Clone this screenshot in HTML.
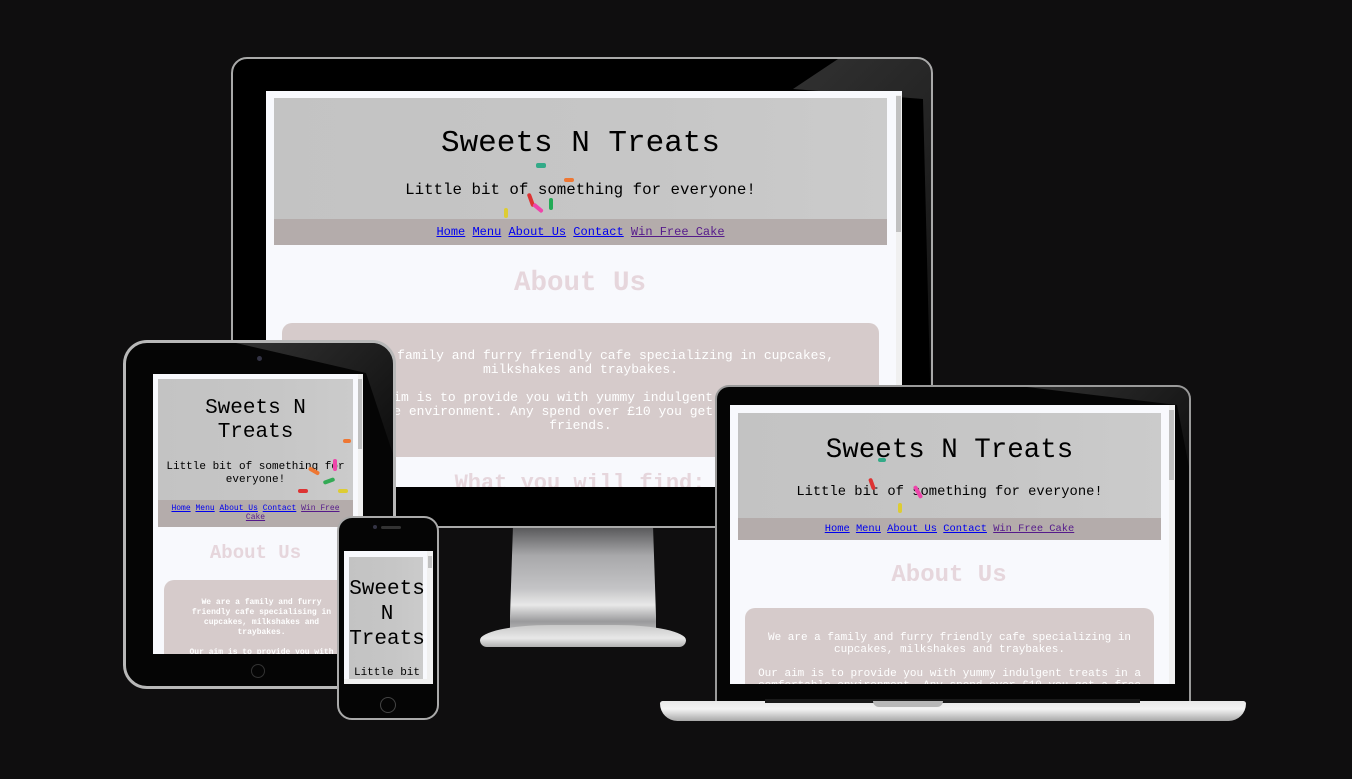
<!DOCTYPE html>
<html><head><meta charset="utf-8"><style>
*{margin:0;padding:0;box-sizing:border-box}
body{width:1352px;height:779px;background:#0f0e0f;position:relative;overflow:hidden;font-family:"Liberation Mono","Courier New",monospace}
.a{position:absolute}
.hdr{position:absolute;background:linear-gradient(90deg,#c3c3c3 0%,#c6c6c6 60%,#cbcbcb 100%);text-align:center;color:#000;overflow:hidden}
.nav{position:absolute;background:#b4acab;text-align:center}
.nav span{color:#00e;text-decoration:underline}
.nav span.v{color:#551a8b}
.h2{position:absolute;text-align:center;color:#e6d6dc;font-weight:bold}
.card{position:absolute;background:#d6cbcb;border-radius:10px;color:#fff;text-align:center;overflow:hidden}
.dot{position:absolute;border-radius:2px}
.gl{position:absolute;background:linear-gradient(135deg,rgba(90,90,90,.55),rgba(30,30,30,.25))}
</style></head><body>

<!-- MONITOR -->
<div class="a" style="left:231px;top:57px;width:702px;height:471px;background:#000;border:2px solid #a9a9a9;border-radius:16px;overflow:hidden">
  <div class="gl" style="left:560px;top:0;width:140px;height:440px;clip-path:polygon(45px 0,140px 0,140px 440px,100% 440px,130px 40px,0 30px)"></div>
</div>
<div class="a" style="left:266px;top:91px;width:636px;height:396px;background:#f8f9fd;overflow:hidden">
  <div class="hdr" style="left:8px;top:7px;width:613px;height:121px">
    <div class="a" style="left:0;top:28px;width:613px;font-size:31px">Sweets N Treats</div>
    <div class="a" style="left:0;top:83px;width:613px;font-size:15.8px">Little bit of something for everyone!</div>
    <div class="dot" style="left:255px;top:95px;width:4px;height:14px;background:#d33;transform:rotate(-20deg)"></div>
    <div class="dot" style="left:262px;top:65px;width:10px;height:5px;background:#3a8;"></div>
    <div class="dot" style="left:290px;top:80px;width:10px;height:4px;background:#e73"></div>
    <div class="dot" style="left:258px;top:108px;width:12px;height:4px;background:#e4a;transform:rotate(40deg)"></div>
    <div class="dot" style="left:230px;top:110px;width:4px;height:10px;background:#dc3"></div>
    <div class="dot" style="left:275px;top:100px;width:4px;height:12px;background:#2a5"></div>
  </div>
  <div class="nav" style="left:8px;top:128px;width:613px;height:26px;font-size:12px;line-height:26px"><span>Home</span> <span>Menu</span> <span>About Us</span> <span>Contact</span> <span class="v">Win Free Cake</span></div>
  <div class="h2" style="left:0;top:177px;width:628px;font-size:27.5px">About Us</div>
  <div class="card" style="left:16px;top:232px;width:597px;height:134px;font-size:13px;line-height:14px;padding-top:26px">We are a family and furry friendly cafe specializing in cupcakes,<br>milkshakes and traybakes.<br><br>Our aim is to provide you with yummy indulgent treats in a<br>comfortable environment. Any spend over £10 you get a free treat for<br>friends.</div>
  <div class="h2" style="left:0;top:380px;width:628px;font-size:22px">What you will find:</div>
  <div class="a" style="left:630px;top:4px;width:6px;height:392px;background:#f0f0f0"></div>
  <div class="a" style="left:630px;top:5px;width:5px;height:136px;background:#c1c1c1"></div>
</div>
<!-- stand -->
<div class="a" style="left:510px;top:528px;width:146px;height:110px;background:linear-gradient(180deg,#5a5a5c 0%,#a8a8aa 25%,#c4c4c6 55%,#e8e8e8 70%,#9a9a9c 85%,#d0d0d0 100%);clip-path:polygon(2% 0,98% 0,100% 80%,100% 100%,0 100%,0 80%)"></div>
<div class="a" style="left:480px;top:625px;width:206px;height:22px;background:linear-gradient(180deg,#c8c8c8,#e8e8e8 60%,#b0b0b0);border-radius:50% 50% 10px 10px/100% 100% 10px 10px"></div>

<!-- TABLET -->
<div class="a" style="left:123px;top:340px;width:273px;height:349px;background:#050505;border:3px solid #b8b8b8;border-radius:24px;overflow:hidden">
  <div class="gl" style="left:100px;top:0;width:170px;height:120px;clip-path:polygon(10px 0,170px 0,170px 120px,140px 30px)"></div>
  <div class="a" style="left:131px;top:13px;width:5px;height:5px;border-radius:50%;background:#334"></div>
  <div class="a" style="left:125px;top:321px;width:14px;height:14px;border-radius:50%;border:1px solid #333"></div>
</div>
<div class="a" style="left:153px;top:374px;width:210px;height:280px;background:#f8f9fd;overflow:hidden">
  <div class="hdr" style="left:5px;top:5px;width:195px;height:121px">
    <div class="a" style="left:0;top:18px;width:195px;font-size:21px;line-height:24px">Sweets N<br>Treats</div>
    <div class="a" style="left:0;top:82px;width:195px;font-size:11px;line-height:13px">Little bit of something for<br>everyone!</div>
    <div class="dot" style="left:150px;top:90px;width:12px;height:4px;background:#e73;transform:rotate(30deg)"></div>
    <div class="dot" style="left:165px;top:100px;width:12px;height:4px;background:#3a5;transform:rotate(-20deg)"></div>
    <div class="dot" style="left:175px;top:80px;width:4px;height:12px;background:#e4a"></div>
    <div class="dot" style="left:140px;top:110px;width:10px;height:4px;background:#d33"></div>
    <div class="dot" style="left:180px;top:110px;width:10px;height:4px;background:#dc3"></div>
    <div class="dot" style="left:185px;top:60px;width:8px;height:4px;background:#e73"></div>
  </div>
  <div class="nav" style="left:5px;top:126px;width:195px;height:27px;font-size:8px;line-height:9px;padding-top:4px"><span>Home</span> <span>Menu</span> <span>About Us</span> <span>Contact</span> <span class="v">Win Free<br>Cake</span></div>
  <div class="h2" style="left:0;top:168px;width:205px;font-size:19px">About Us</div>
  <div class="card" style="left:11px;top:206px;width:195px;height:90px;font-size:8px;line-height:10px;padding-top:18px;font-weight:bold">We are a family and furry<br>friendly cafe specialising in<br>cupcakes, milkshakes and<br>traybakes.<br><br>Our aim is to provide you with</div>
  <div class="a" style="left:205px;top:0;width:5px;height:280px;background:#f0f0f0"></div>
  <div class="a" style="left:205px;top:5px;width:4px;height:70px;background:#c1c1c1"></div>
</div>

<!-- PHONE -->
<div class="a" style="left:337px;top:516px;width:102px;height:204px;background:#050505;border:2px solid #aaa;border-radius:15px">
  <div class="a" style="left:34px;top:7px;width:4px;height:4px;border-radius:50%;background:#334"></div>
  <div class="a" style="left:42px;top:8px;width:20px;height:3px;border-radius:2px;background:#333"></div>
  <div class="a" style="left:41px;top:179px;width:16px;height:16px;border-radius:50%;border:1px solid #444"></div>
</div>
<div class="a" style="left:344px;top:551px;width:89px;height:133px;background:#f8f9fd;overflow:hidden">
  <div class="hdr" style="left:5px;top:6px;width:74px;height:124px;overflow:visible">
    <div class="a" style="left:-5px;top:20px;width:86px;font-size:21px;line-height:25px">Sweets<br>N<br>Treats</div>
    <div class="a" style="left:-5px;top:110px;width:86px;font-size:11px">Little bit</div>
  </div>
  <div class="a" style="left:83px;top:0;width:6px;height:133px;background:#f0f0f0"></div>
  <div class="a" style="left:84px;top:5px;width:4px;height:12px;background:#c1c1c1"></div>
  <div class="a" style="left:0;top:128px;width:84px;height:5px;background:#f0f0f0"></div>
</div>

<!-- LAPTOP -->
<div class="a" style="left:715px;top:385px;width:476px;height:316px;background:#050505;border:2px solid #9a9a9a;border-bottom:none;border-radius:14px 14px 0 0;overflow:hidden">
  <div class="gl" style="left:290px;top:0;width:186px;height:100px;clip-path:polygon(20px 0,186px 0,186px 100px,170px 18px)"></div>
</div>
<div class="a" style="left:730px;top:405px;width:445px;height:279px;background:#f8f9fd;overflow:hidden">
  <div class="hdr" style="left:8px;top:8px;width:423px;height:105px">
    <div class="a" style="left:0;top:22px;width:423px;font-size:27.5px">Sweets N Treats</div>
    <div class="a" style="left:0;top:72px;width:423px;font-size:13.8px">Little bit of something for everyone!</div>
    <div class="dot" style="left:132px;top:65px;width:4px;height:12px;background:#d33;transform:rotate(-20deg)"></div>
    <div class="dot" style="left:178px;top:72px;width:4px;height:14px;background:#e4a;transform:rotate(-30deg)"></div>
    <div class="dot" style="left:140px;top:45px;width:8px;height:4px;background:#3a8"></div>
    <div class="dot" style="left:160px;top:90px;width:4px;height:10px;background:#dc3"></div>
  </div>
  <div class="nav" style="left:8px;top:113px;width:423px;height:22px;font-size:10.4px;line-height:22px"><span>Home</span> <span>Menu</span> <span>About Us</span> <span>Contact</span> <span class="v">Win Free Cake</span></div>
  <div class="h2" style="left:0;top:157px;width:438px;font-size:24px">About Us</div>
  <div class="card" style="left:15px;top:203px;width:409px;height:90px;font-size:11px;line-height:12px;padding-top:24px">We are a family and furry friendly cafe specializing in<br>cupcakes, milkshakes and traybakes.<br><br>Our aim is to provide you with yummy indulgent treats in a<br>comfortable environment. Any spend over £10 you get a free</div>
  <div class="a" style="left:439px;top:0;width:6px;height:279px;background:#f0f0f0"></div>
  <div class="a" style="left:439px;top:5px;width:5px;height:70px;background:#c1c1c1"></div>
</div>
<div class="a" style="left:660px;top:701px;width:586px;height:20px;background:linear-gradient(180deg,#e8e8e8,#f4f4f4 40%,#a8a8a8);border-radius:3px 3px 20px 20px"></div>
<div class="a" style="left:765px;top:699px;width:375px;height:4px;background:#1a1a1a"></div>
<div class="a" style="left:873px;top:701px;width:70px;height:6px;background:#b8b8b8;border-radius:0 0 6px 6px"></div>

</body></html>
